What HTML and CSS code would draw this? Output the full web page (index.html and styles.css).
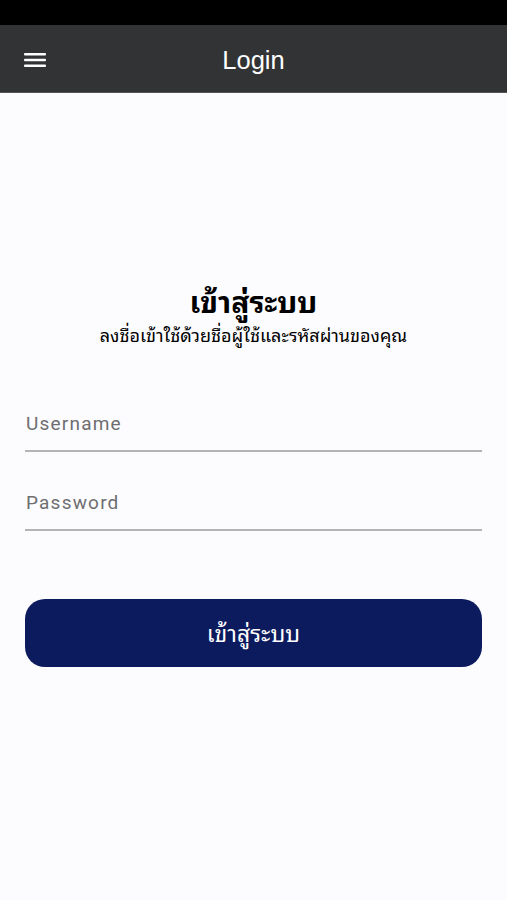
FILE: index.html
```html
<!DOCTYPE html>
<html lang="th">
<head>
<meta charset="utf-8">
<title>Login</title>
<link rel="stylesheet" href="styles.css">
</head>
<body>
<div class="status"></div>
<header class="appbar">
  <button class="menu" aria-label="menu">
    <svg width="22" height="16" viewBox="0 0 22 16"><rect x="0" y="1" width="22" height="2.4" rx="1" fill="#fff"/><rect x="0" y="6.8" width="22" height="2.4" rx="1" fill="#fff"/><rect x="0" y="12.6" width="22" height="2.4" rx="1" fill="#fff"/></svg>
  </button>
  <h1 class="title">Login</h1>
</header>
<main class="content">
  <div class="intro">
    <h2 class="heading">เข้าสู่ระบบ</h2>
    <p class="sub">ลงชื่อเข้าใช้ด้วยชื่อผู้ใช้และรหัสผ่านของคุณ</p>
  </div>
  <form class="form">
    <label class="field"><input type="text" placeholder="Username"></label>
    <label class="field"><input type="password" placeholder="Password"></label>
    <button type="button" class="submit">เข้าสู่ระบบ</button>
  </form>
</main>
</body>
</html>
```
FILE: styles.css
```css
* { box-sizing: border-box; }
html, body { margin: 0; padding: 0; }
body {
  width: 507px;
  height: 900px;
  background: #fcfcfe;
  font-family: "Noto Sans Thai Looped", "Loma", "Garuda", "Noto Sans Thai", "Noto Sans", Roboto, sans-serif;
  overflow: hidden;
}
.status { height: 25px; background: #000; }
.appbar {
  height: 68px;
  background: #323335;
  display: flex;
  align-items: center;
  position: relative;
  border-bottom: 1px solid #555;
}
.menu {
  background: none;
  border: 0;
  padding: 0;
  margin-left: 24px;
  display: flex;
  align-items: center;
  height: 22px;
  margin-top: 2px;
}
.title {
  position: absolute;
  left: 0; right: 0;
  top: 0; bottom: 0;
  margin: 0;
  display: flex;
  align-items: center;
  justify-content: center;
  font-family: "Liberation Sans", Arial, sans-serif;
  font-weight: 400;
  font-size: 25.5px;
  color: #fff;
  pointer-events: none;
  padding-top: 3px;
}
.content { padding: 0 25px; }
.intro {
  margin-top: 189px;
  text-align: center;
  color: #000;
}
.heading {
  margin: 0;
  font-size: 30px;
  font-weight: 700;
  line-height: 36px;
}
.sub {
  margin: 4px 0 0;
  font-size: 18px;
  line-height: 24px;
}
.form {
  margin-top: 57px;
  display: flex;
  flex-direction: column;
}
.field {
  display: block;
  border-bottom: 2px solid #b4b4b4;
  margin-bottom: 30px;
}
.field input {
  width: 100%;
  border: 0;
  background: transparent;
  height: 47px;
  padding: 0 0 7px 1px;
  font-family: Roboto, "Noto Sans", sans-serif;
  font-size: 19px;
  letter-spacing: 1.2px;
  color: #333;
  outline: none;
}
.field input::placeholder { color: #6e6e70; }
.submit {
  margin-top: 38px;
  height: 68px;
  border: 0;
  border-radius: 20px;
  background: #0c1b5e;
  color: #fff;
  font-family: inherit;
  font-size: 23px;
  padding-bottom: 4px;
}
```
